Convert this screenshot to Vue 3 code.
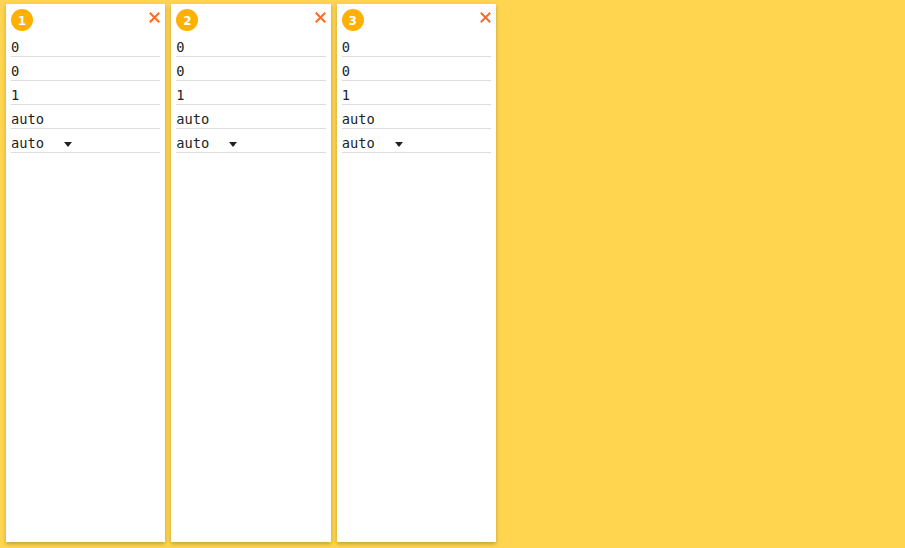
<template>
  <div class="page">
    <section v-for="n in panels" :key="n" class="panel">
      <header class="panel-header">
        <span class="badge">{{ n }}</span>
        <button type="button" class="close-btn" aria-label="Remove">
          <svg width="11" height="11" viewBox="0 0 11 11">
            <path d="M0.8 0.8 L10.2 10.2 M10.2 0.8 L0.8 10.2" />
          </svg>
        </button>
      </header>
      <div v-for="(value, i) in fields" :key="i" class="field">{{ value }}</div>
      <div class="field select">
        <span>auto</span>
        <i class="caret"></i>
      </div>
    </section>
  </div>
</template>

<script setup>
const panels = [1, 2, 3];
const fields = ["0", "0", "1", "auto"];
</script>

<style>
html,
body {
  margin: 0;
  background: #ffd54f;
}
</style>

<style scoped>
.page {
  display: flex;
  gap: 6px;
  box-sizing: border-box;
  width: 905px;
  height: 548px;
  padding: 4px 6px 6px;
  background: #ffd54f;
  overflow: hidden;
}

.panel {
  box-sizing: border-box;
  width: 159.33px;
  height: 538px;
  padding: 5px 5px 0;
  background: #fff;
  box-shadow: 0 2px 4px rgba(0, 0, 0, 0.25);
}

.panel-header {
  display: flex;
  justify-content: space-between;
  align-items: flex-start;
  height: 24px;
}

.badge {
  width: 22px;
  height: 22px;
  border-radius: 50%;
  background: #ffb000;
  color: #fff;
  font: bold 12px/25px "DejaVu Sans", sans-serif;
  text-align: center;
}

.close-btn {
  display: block;
  width: 11px;
  height: 11px;
  margin: 3px 0 0 0;
  padding: 0;
  border: none;
  background: none;
  cursor: pointer;
}

.close-btn svg {
  display: block;
}

.close-btn path {
  fill: none;
  stroke: #ff6a1f;
  stroke-width: 2;
}

.field {
  box-sizing: border-box;
  height: 24px;
  padding: 5px 0 0 0;
  border-bottom: 1px solid #ddd;
  color: #222;
  font: 13.7px/19px "DejaVu Sans Mono", monospace;
}

.select {
  display: flex;
  align-items: center;
  padding: 5px 0 0 0;
}

.caret {
  width: 0;
  height: 0;
  margin: 2px 0 0 20px;
  border-left: 4px solid transparent;
  border-right: 4px solid transparent;
  border-top: 5px solid #222;
}
</style>
